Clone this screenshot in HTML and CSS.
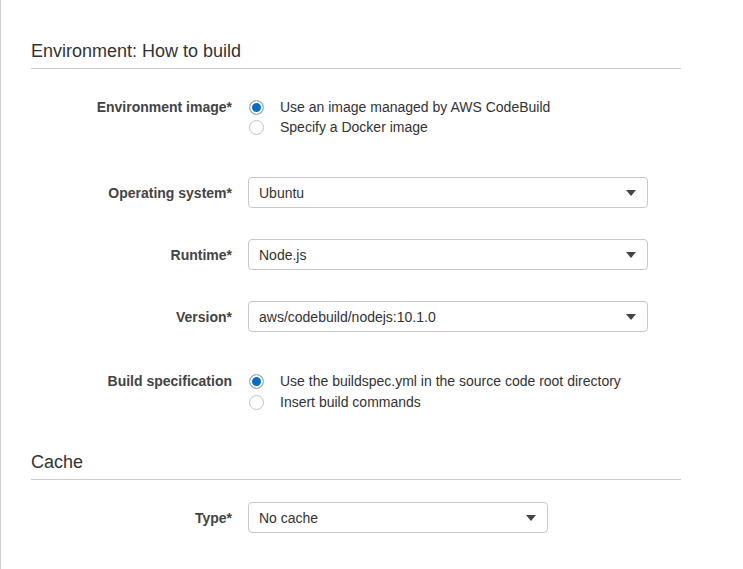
FILE: index.html
```html
<!DOCTYPE html>
<html>
<head>
<meta charset="utf-8">
<link rel="stylesheet" href="styles.css">
</head>
<body>
<div class="page">
  <section class="section">
    <h2 class="section-title">Environment: How to build</h2>
    <div class="field field-radio env-image">
      <div class="label">Environment image*</div>
      <div class="radios">
        <div class="radio"><span class="dot checked"></span><span>Use an image managed by AWS CodeBuild</span></div>
        <div class="radio"><span class="dot"></span><span>Specify a Docker image</span></div>
      </div>
    </div>
    <div class="field field-select first-select">
      <div class="label">Operating system*</div>
      <div class="select"><span>Ubuntu</span><svg class="caret" width="10" height="6" viewBox="0 0 10 6"><path d="M0 0H10L5 6Z" fill="#444"/></svg></div>
    </div>
    <div class="field field-select">
      <div class="label">Runtime*</div>
      <div class="select"><span>Node.js</span><svg class="caret" width="10" height="6" viewBox="0 0 10 6"><path d="M0 0H10L5 6Z" fill="#444"/></svg></div>
    </div>
    <div class="field field-select">
      <div class="label">Version*</div>
      <div class="select"><span>aws/codebuild/nodejs:10.1.0</span><svg class="caret" width="10" height="6" viewBox="0 0 10 6"><path d="M0 0H10L5 6Z" fill="#444"/></svg></div>
    </div>
    <div class="field field-radio build-spec">
      <div class="label">Build specification</div>
      <div class="radios">
        <div class="radio"><span class="dot checked"></span><span>Use the buildspec.yml in the source code root directory</span></div>
        <div class="radio"><span class="dot"></span><span>Insert build commands</span></div>
      </div>
    </div>
  </section>
  <section class="section cache">
    <h2 class="section-title">Cache</h2>
    <div class="field field-select cache-type">
      <div class="label">Type*</div>
      <div class="select select-small"><span>No cache</span><svg class="caret" width="10" height="6" viewBox="0 0 10 6"><path d="M0 0H10L5 6Z" fill="#444"/></svg></div>
    </div>
  </section>
</div>
</body>
</html>
```

FILE: styles.css
```css
html, body {
  margin: 0;
  padding: 0;
  background: #fff;
}
body {
  font-family: "Liberation Sans", Arial, sans-serif;
  font-size: 14px;
  color: #333;
}
.page {
  border-left: 1px solid #cfcfcf;
  min-height: 569px;
  box-sizing: border-box;
  padding-left: 30px;
  padding-top: 40px;
}
.section-title {
  margin: 0;
  width: 650px;
  font-size: 18px;
  font-weight: normal;
  line-height: 22px;
  color: #333;
  padding-bottom: 6px;
  border-bottom: 1px solid #cccccc;
}
.field {
  display: flex;
  gap: 16px;
}
.field-select {
  align-items: center;
  margin-top: 31px;
}
.label {
  width: 201px;
  flex: none;
  text-align: right;
  font-weight: bold;
  font-size: 14px;
  color: #444;
}
.field-radio .label {
  line-height: 20px;
}
.env-image {
  margin-top: 28px;
}
.first-select {
  margin-top: 40px;
}
.build-spec {
  margin-top: 39px;
}
.build-spec .label,
.build-spec .radio {
  line-height: 21px;
}
.radios {
  display: flex;
  flex-direction: column;
}
.radio {
  display: flex;
  align-items: center;
  gap: 16px;
  line-height: 20px;
  color: #333;
}
.dot {
  width: 15px;
  height: 15px;
  box-sizing: border-box;
  margin-left: 1px;
  border: 1px solid #c4c4c4;
  border-radius: 50%;
  background: #fff;
  flex: none;
}
.dot.checked {
  background: #0a6cc2;
  box-shadow: inset 0 0 0 2px #fff;
  border-color: #b8b8b8;
}
.select {
  width: 400px;
  height: 31px;
  box-sizing: border-box;
  border: 1px solid #c8c8c8;
  border-radius: 4px;
  display: flex;
  align-items: center;
  justify-content: space-between;
  padding: 0 11px 0 10px;
  color: #333;
  background: #fff;
}
.select-small {
  width: 300px;
}
.caret {
  display: block;
  flex: none;
}
.cache {
  margin-top: 38px;
}
.cache-type {
  margin-top: 22px;
}
```
